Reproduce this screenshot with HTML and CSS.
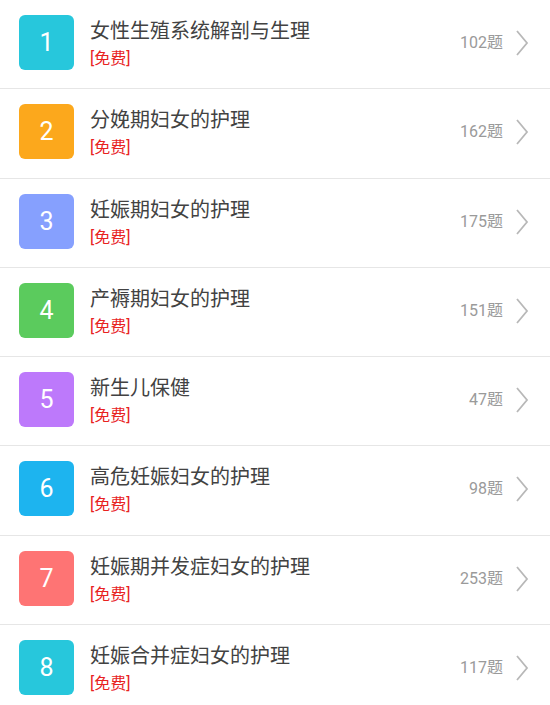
FILE: index.html
```html
<!DOCTYPE html>
<html lang="zh-CN">
<head>
    <meta charset="UTF-8">
    <meta name="viewport" content="width=device-width, initial-scale=1.0">
    <title>章节练习</title>
    <link rel="stylesheet" href="styles.css">
</head>
<body>
    <ul class="chapter-list">
        <li class="chapter">
            <div class="badge c1">1</div>
            <div class="info">
                <p class="title">女性生殖系统解剖与生理</p>
                <p class="free">[免费]</p>
            </div>
            <span class="count">102题</span>
            <svg class="arrow" viewBox="0 0 14 28"><path d="M2 2 L12 14 L2 26"/></svg>
        </li>
        <li class="chapter">
            <div class="badge c2">2</div>
            <div class="info">
                <p class="title">分娩期妇女的护理</p>
                <p class="free">[免费]</p>
            </div>
            <span class="count">162题</span>
            <svg class="arrow" viewBox="0 0 14 28"><path d="M2 2 L12 14 L2 26"/></svg>
        </li>
        <li class="chapter">
            <div class="badge c3">3</div>
            <div class="info">
                <p class="title">妊娠期妇女的护理</p>
                <p class="free">[免费]</p>
            </div>
            <span class="count">175题</span>
            <svg class="arrow" viewBox="0 0 14 28"><path d="M2 2 L12 14 L2 26"/></svg>
        </li>
        <li class="chapter">
            <div class="badge c4">4</div>
            <div class="info">
                <p class="title">产褥期妇女的护理</p>
                <p class="free">[免费]</p>
            </div>
            <span class="count">151题</span>
            <svg class="arrow" viewBox="0 0 14 28"><path d="M2 2 L12 14 L2 26"/></svg>
        </li>
        <li class="chapter">
            <div class="badge c5">5</div>
            <div class="info">
                <p class="title">新生儿保健</p>
                <p class="free">[免费]</p>
            </div>
            <span class="count">47题</span>
            <svg class="arrow" viewBox="0 0 14 28"><path d="M2 2 L12 14 L2 26"/></svg>
        </li>
        <li class="chapter">
            <div class="badge c6">6</div>
            <div class="info">
                <p class="title">高危妊娠妇女的护理</p>
                <p class="free">[免费]</p>
            </div>
            <span class="count">98题</span>
            <svg class="arrow" viewBox="0 0 14 28"><path d="M2 2 L12 14 L2 26"/></svg>
        </li>
        <li class="chapter">
            <div class="badge c7">7</div>
            <div class="info">
                <p class="title">妊娠期并发症妇女的护理</p>
                <p class="free">[免费]</p>
            </div>
            <span class="count">253题</span>
            <svg class="arrow" viewBox="0 0 14 28"><path d="M2 2 L12 14 L2 26"/></svg>
        </li>
        <li class="chapter">
            <div class="badge c8">8</div>
            <div class="info">
                <p class="title">妊娠合并症妇女的护理</p>
                <p class="free">[免费]</p>
            </div>
            <span class="count">117题</span>
            <svg class="arrow" viewBox="0 0 14 28"><path d="M2 2 L12 14 L2 26"/></svg>
        </li>
    </ul>
</body>
</html>
```

FILE: styles.css
```css
body {
    margin: 0;
    background-color: #ffffff;
    font-family: Roboto, "Noto Sans CJK SC", sans-serif;
    overflow: hidden;
}
.chapter-list {
    list-style: none;
    margin: 0;
    padding: 0;
}
.chapter {
    display: flex;
    align-items: flex-start;
    height: 88.3px;
    border-bottom: 1px solid #e6e6e6;
    padding: 0 21px 0 19px;
}
.badge {
    width: 55px;
    height: 55px;
    margin-top: 15px;
    border-radius: 6px;
    color: #ffffff;
    font-size: 25px;
    display: flex;
    align-items: center;
    justify-content: center;
    flex-shrink: 0;
}
.c1, .c8 { background-color: #27c7dc; }
.c2 { background-color: #fca81c; }
.c3 { background-color: #86a0fe; }
.c4 { background-color: #5bcb5d; }
.c5 { background-color: #bd79fb; }
.c6 { background-color: #1db4ef; }
.c7 { background-color: #fe7474; }
.info {
    flex: 1;
    margin-left: 16px;
    padding-top: 18px;
}
.title {
    margin: 0;
    font-size: 20px;
    line-height: 27px;
    color: #424242;
}
.free {
    margin: 0;
    margin-top: 2px;
    font-size: 16px;
    line-height: 24px;
    color: #e8221f;
}
.count {
    margin-top: 32px;
    font-size: 16px;
    line-height: 22px;
    color: #9a9a9a;
}
.arrow {
    width: 14px;
    height: 28px;
    margin-top: 29px;
    margin-left: 12px;
    fill: none;
    stroke: #b8b8b8;
    stroke-width: 1.8;
}
```
